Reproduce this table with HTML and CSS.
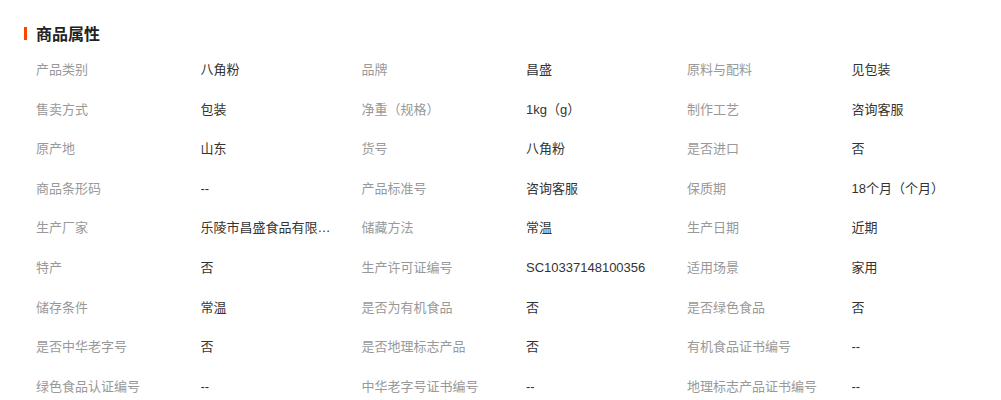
FILE: index.html
```html
<!DOCTYPE html>
<html>
<head>
    <meta charset="utf-8">
    <title>商品属性</title>
    <link rel="stylesheet" href="styles.css">
</head>
<body>
    <div class="attrs">
        <h2 class="attrs-title">商品属性</h2>
        <div class="attrs-grid">
            <span class="name">产品类别</span><span class="value">八角粉</span>
            <span class="name">品牌</span><span class="value">昌盛</span>
            <span class="name">原料与配料</span><span class="value">见包装</span>

            <span class="name">售卖方式</span><span class="value">包装</span>
            <span class="name">净重（规格）</span><span class="value">1kg（g）</span>
            <span class="name">制作工艺</span><span class="value">咨询客服</span>

            <span class="name">原产地</span><span class="value">山东</span>
            <span class="name">货号</span><span class="value">八角粉</span>
            <span class="name">是否进口</span><span class="value">否</span>

            <span class="name">商品条形码</span><span class="value">--</span>
            <span class="name">产品标准号</span><span class="value">咨询客服</span>
            <span class="name">保质期</span><span class="value">18个月（个月）</span>

            <span class="name">生产厂家</span><span class="value" title="乐陵市昌盛食品有限公司">乐陵市昌盛食品有限公司</span>
            <span class="name">储藏方法</span><span class="value">常温</span>
            <span class="name">生产日期</span><span class="value">近期</span>

            <span class="name">特产</span><span class="value">否</span>
            <span class="name">生产许可证编号</span><span class="value">SC10337148100356</span>
            <span class="name">适用场景</span><span class="value">家用</span>

            <span class="name">储存条件</span><span class="value">常温</span>
            <span class="name">是否为有机食品</span><span class="value">否</span>
            <span class="name">是否绿色食品</span><span class="value">否</span>

            <span class="name">是否中华老字号</span><span class="value">否</span>
            <span class="name">是否地理标志产品</span><span class="value">否</span>
            <span class="name">有机食品证书编号</span><span class="value">--</span>

            <span class="name">绿色食品认证编号</span><span class="value">--</span>
            <span class="name">中华老字号证书编号</span><span class="value">--</span>
            <span class="name">地理标志产品证书编号</span><span class="value">--</span>
        </div>
    </div>
</body>
</html>
```

FILE: styles.css
```css
body {
    margin: 0;
    padding: 0;
    background-color: #fff;
    font-family: "Liberation Sans", Arial, "Noto Sans CJK SC", sans-serif;
    font-size: 13px;
    color: #333;
}
.attrs {
    padding: 24px 0 0 24px;
}
.attrs-title {
    display: flex;
    align-items: center;
    margin: 0;
    height: 18px;
    font-size: 16px;
    font-weight: bold;
    color: #222;
}
.attrs-title::before {
    content: "";
    width: 3px;
    height: 13px;
    margin-right: 9px;
    background-color: #ff4400;
}
.attrs-grid {
    display: grid;
    grid-template-columns: repeat(3, 164.5px 161px);
    grid-auto-rows: 39.6px;
    padding: 8px 0 0 12px;
}
.attrs-grid span {
    line-height: 39.6px;
    white-space: nowrap;
}
.name {
    color: #999;
}
.value {
    color: #333;
    max-width: 131px;
    overflow: hidden;
    text-overflow: ellipsis;
}
```
